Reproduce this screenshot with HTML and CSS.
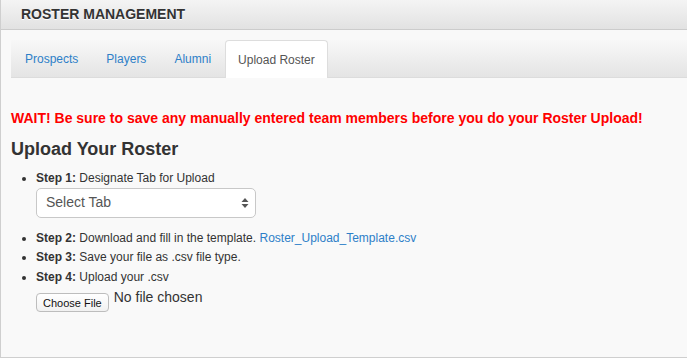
FILE: index.html
```html
<!DOCTYPE html>
<html lang="en">
<head>
<meta charset="UTF-8">
<title>Roster Management</title>
<link rel="stylesheet" href="styles.css">
</head>
<body>

<div class="panel">
    <div class="panelHeading">ROSTER MANAGEMENT</div>
    <div class="panelBody">
        <div class="tabNav">
            <a href="#" class="tab">Prospects</a>
            <a href="#" class="tab">Players</a>
            <a href="#" class="tab">Alumni</a>
            <a href="#" class="tab active">Upload Roster</a>
        </div>

        <p class="warning">WAIT! Be sure to save any manually entered team members before you do your Roster Upload!</p>

        <h3 class="uploadTitle">Upload Your Roster</h3>
        <ul class="steps">
            <li>
                <b>Step 1:</b> Designate Tab for Upload
                <div class="selectBox">
                    <span>Select Tab</span>
                    <svg class="selectArrows" width="8" height="12" viewBox="0 0 8 12">
                        <path d="M4 1 L7.5 5 L0.5 5 Z" fill="#555"/>
                        <path d="M4 11 L7.5 7 L0.5 7 Z" fill="#555"/>
                    </svg>
                </div>
            </li>
            <li><b>Step 2:</b> Download and fill in the template. <a href="#" class="templateLink">Roster_Upload_Template.csv</a></li>
            <li><b>Step 3:</b> Save your file as .csv file type.</li>
            <li>
                <b>Step 4:</b> Upload your .csv
                <div class="fileRow">
                    <button type="button" class="fileButton">Choose File</button>
                    <span class="fileName">No file chosen</span>
                </div>
            </li>
        </ul>
    </div>
</div>

</body>
</html>
```

FILE: styles.css
```css
body {
    font-family: "Liberation Sans", Arial, sans-serif;
    margin: 0;
    padding: 0;
    background-color: #f9f9f9;
    color: #333;
}
.panel {
    height: 358px;
    box-sizing: border-box;
    border-left: 1px solid #cfcfcf;
    border-bottom: 1px solid #cfcfcf;
}
.panelHeading {
    height: 29px;
    line-height: 29px;
    padding-left: 20px;
    border-bottom: 1px solid #cccccc;
    background: linear-gradient(#f4f4f4, #e2e2e2);
    font-size: 14px;
    font-weight: bold;
    color: #333;
    text-shadow: 0 1px 0 #fff;
}
.panelBody {
    padding: 10px 0 0 10px;
}
.tabNav {
    display: flex;
    height: 37px;
    border-bottom: 1px solid #dcdcdc;
    background: linear-gradient(#f8f8f8, #e4e4e4);
}
.tab {
    display: block;
    padding: 2px 14px 0;
    line-height: 35px;
    font-size: 12px;
    color: #2d7fc8;
    text-decoration: none;
}
.tab.active {
    height: 38px;
    box-sizing: border-box;
    padding: 2px 12px 0 12px;
    line-height: 34px;
    background-color: #fff;
    color: #555;
    border: 1px solid #dddddd;
    border-bottom: none;
    border-radius: 4px 4px 0 0;
}
.warning {
    margin: 30px 0 0;
    line-height: 20px;
    font-size: 14px;
    font-weight: bold;
    color: #ff0000;
}
.uploadTitle {
    margin: 10px 0 0;
    line-height: 22px;
    font-size: 18px;
    font-weight: bold;
    color: #333;
}
.steps {
    margin: 9px 0 0;
    padding-left: 25px;
    font-size: 12px;
    line-height: 19.5px;
}
.selectBox {
    display: flex;
    justify-content: space-between;
    align-items: center;
    width: 220px;
    height: 30px;
    box-sizing: border-box;
    margin: -1px 0 11px;
    padding: 0 6px 0 9px;
    background-color: #fff;
    border: 1px solid #c8c8c8;
    border-radius: 5px;
    font-size: 14px;
    color: #555;
}
.templateLink {
    color: #2d7fc8;
    text-decoration: none;
}
.fileRow {
    display: flex;
    align-items: flex-start;
    gap: 5px;
    margin-top: 2px;
}
.fileButton {
    margin-top: 4px;
    height: 19px;
    padding: 0 6px;
    font-family: "Liberation Sans", Arial, sans-serif;
    font-size: 11px;
    color: #111;
    background: linear-gradient(#ffffff, #f1f1f1);
    border: 1px solid #bdbdbd;
    border-radius: 4px;
}
.fileName {
    font-size: 14px;
    line-height: 16px;
    color: #333;
}
```
